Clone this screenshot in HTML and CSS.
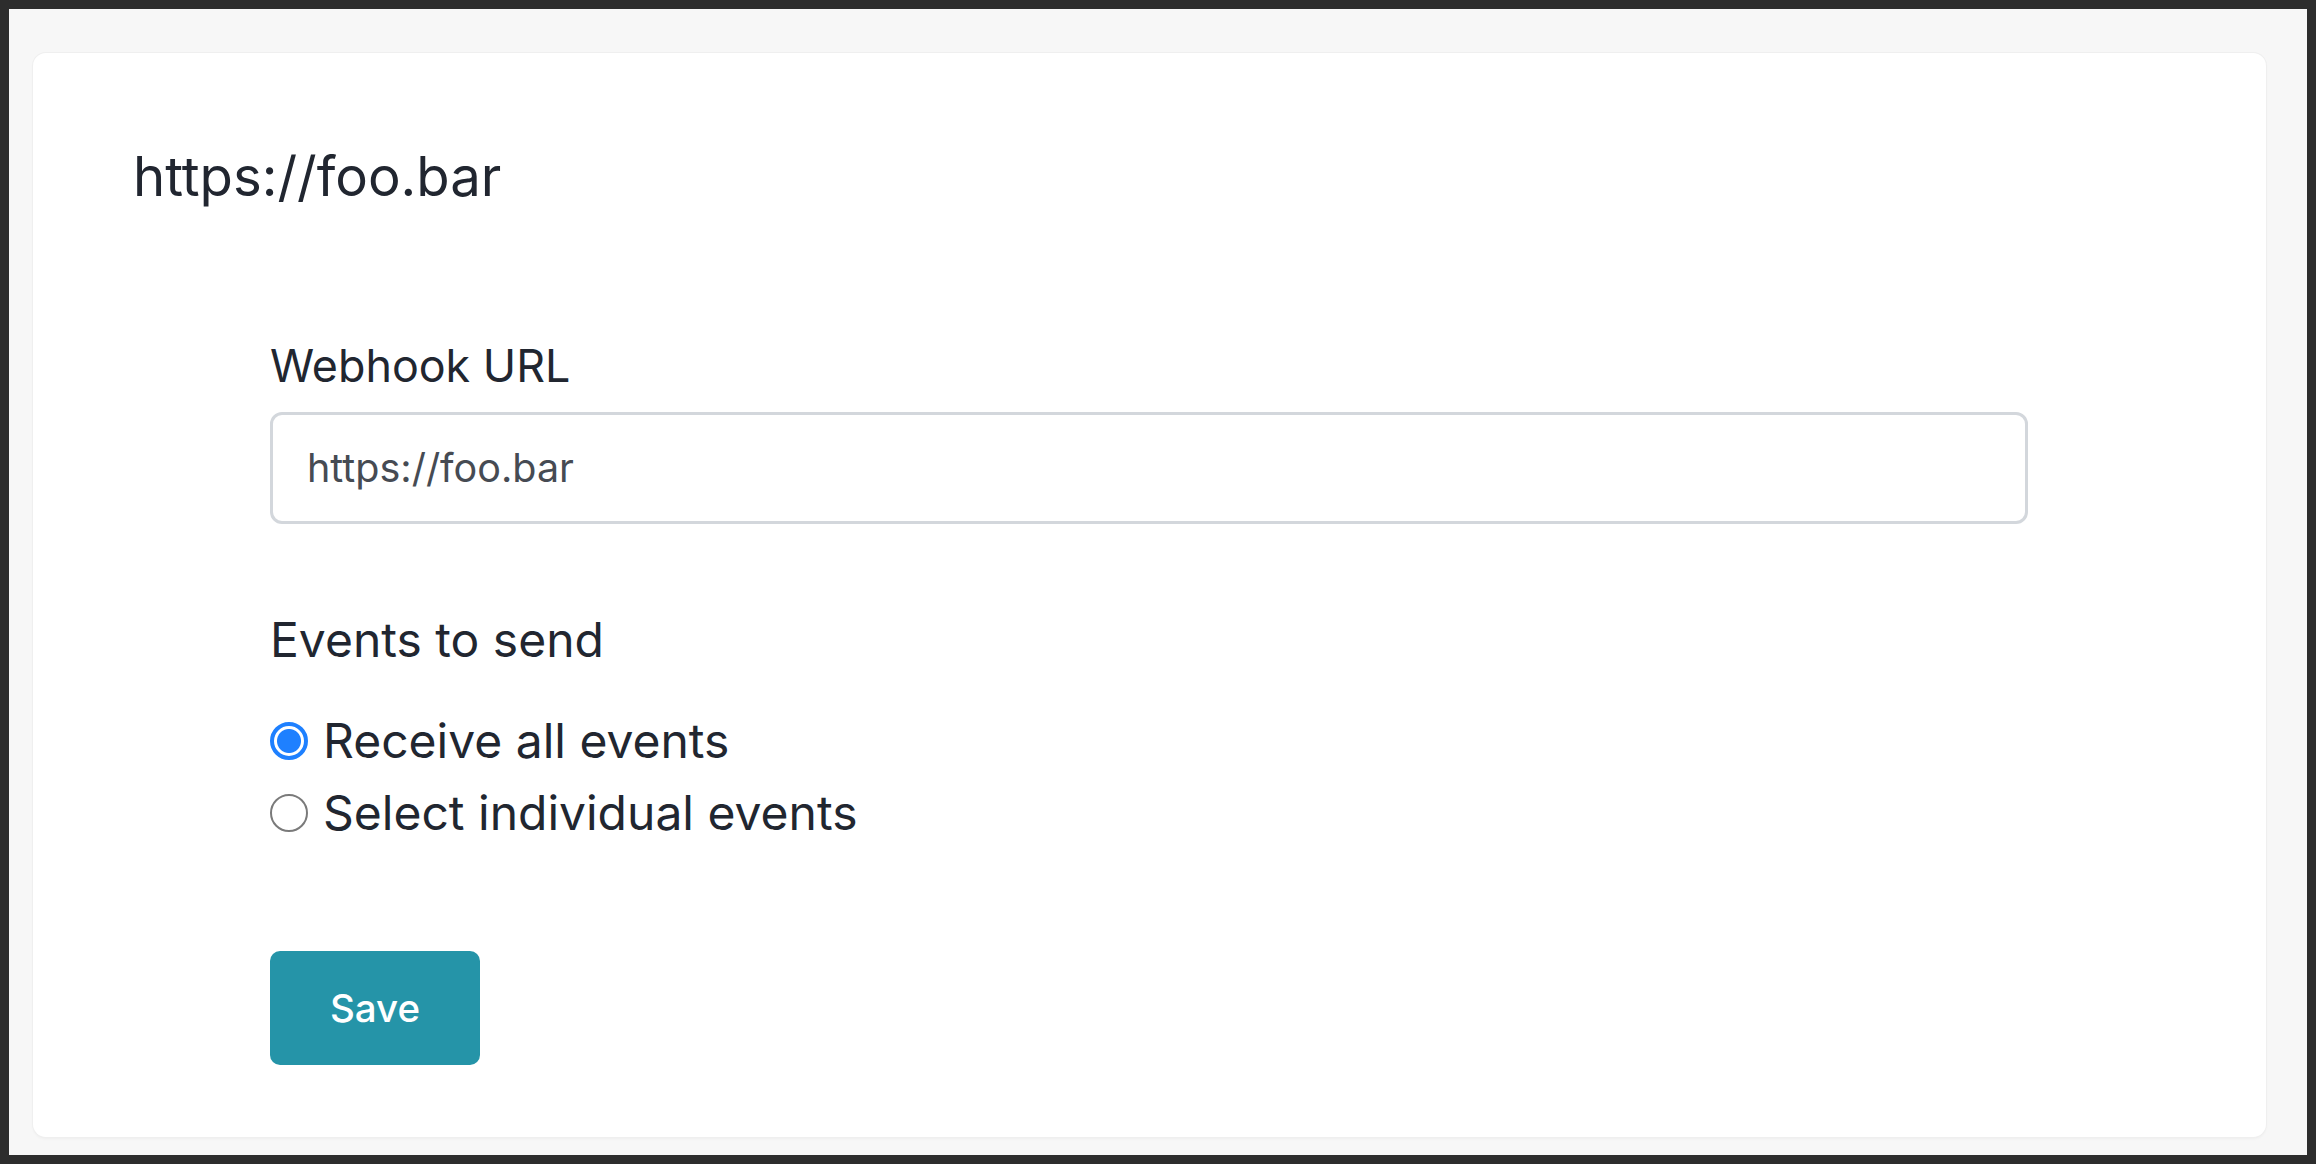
FILE: index.html
```html
<!DOCTYPE html>
<html lang="en">
<head>
<meta charset="utf-8">
<title>Webhook</title>
<link rel="stylesheet" href="styles.css">
</head>
<body>
<div class="page">
  <main class="card">
    <h1 class="card-title">https://foo.bar</h1>
    <form class="webhook-form">
      <label class="field-label" for="url">Webhook URL</label>
      <input class="text-input" id="url" type="text" value="https://foo.bar">
      <div class="group-label">Events to send</div>
      <div class="radio-list">
        <label class="radio-row">
          <input class="radio" type="radio" name="events" checked>
          <span>Receive all events</span>
        </label>
        <label class="radio-row">
          <input class="radio" type="radio" name="events">
          <span>Select individual events</span>
        </label>
      </div>
      <button class="save-btn" type="button">Save</button>
    </form>
  </main>
</div>
</body>
</html>
```
FILE: styles.css
```css
html {
  background: #2d2d2d;
}
body {
  margin: 0;
  font-family: "Inter", "Liberation Sans", sans-serif;
  color: #212630;
}
.page {
  margin: 9px;
  height: 1146px;
  box-sizing: border-box;
  padding: 44px 41px 18px 24px;
  background: #f7f7f7;
}
.card {
  background: #ffffff;
  border-radius: 13px;
  box-shadow: 0 0 0 1px #efefef, 0 2px 3px rgba(0, 0, 0, 0.04);
  padding: 91px 100px 72px 100px;
}
.card-title {
  margin: 0;
  font-size: 54.5px;
  line-height: 64px;
  font-weight: 400;
  color: #212630;
}
.webhook-form {
  margin: 130px 138px 0 137px;
  display: flex;
  flex-direction: column;
  align-items: flex-start;
}
.field-label {
  font-size: 44.8px;
  line-height: 56px;
}
.text-input {
  margin-top: 18px;
  align-self: stretch;
  box-sizing: border-box;
  height: 112px;
  border: 3px solid #d3d7dc;
  border-radius: 12px;
  padding: 0 34px;
  font-family: inherit;
  font-size: 39.5px;
  color: #464b53;
  background: #fff;
  outline: none;
}
.group-label {
  margin-top: 87px;
  font-size: 48px;
  line-height: 58px;
}
.radio-list {
  margin-top: 36px;
  display: flex;
  flex-direction: column;
}
.radio-row {
  display: flex;
  align-items: center;
  gap: 15px;
  height: 72px;
  font-size: 48px;
  line-height: 72px;
}
.radio {
  appearance: none;
  -webkit-appearance: none;
  margin: 0;
  width: 38px;
  height: 38px;
  flex: none;
  box-sizing: border-box;
  border-radius: 50%;
  border: 2.5px solid #7a7a7a;
  background: #fff;
}
.radio:checked {
  border: 4px solid #1e80ff;
  background: radial-gradient(circle at center, #1e80ff 0 11.5px, #ffffff 12.5px);
}
.save-btn {
  margin-top: 102px;
  width: 210px;
  height: 114px;
  border: none;
  border-radius: 10px;
  background: #2594a8;
  color: #ffffff;
  font-family: inherit;
  font-size: 38.5px;
  font-weight: 500;
  padding: 0;
}
```
